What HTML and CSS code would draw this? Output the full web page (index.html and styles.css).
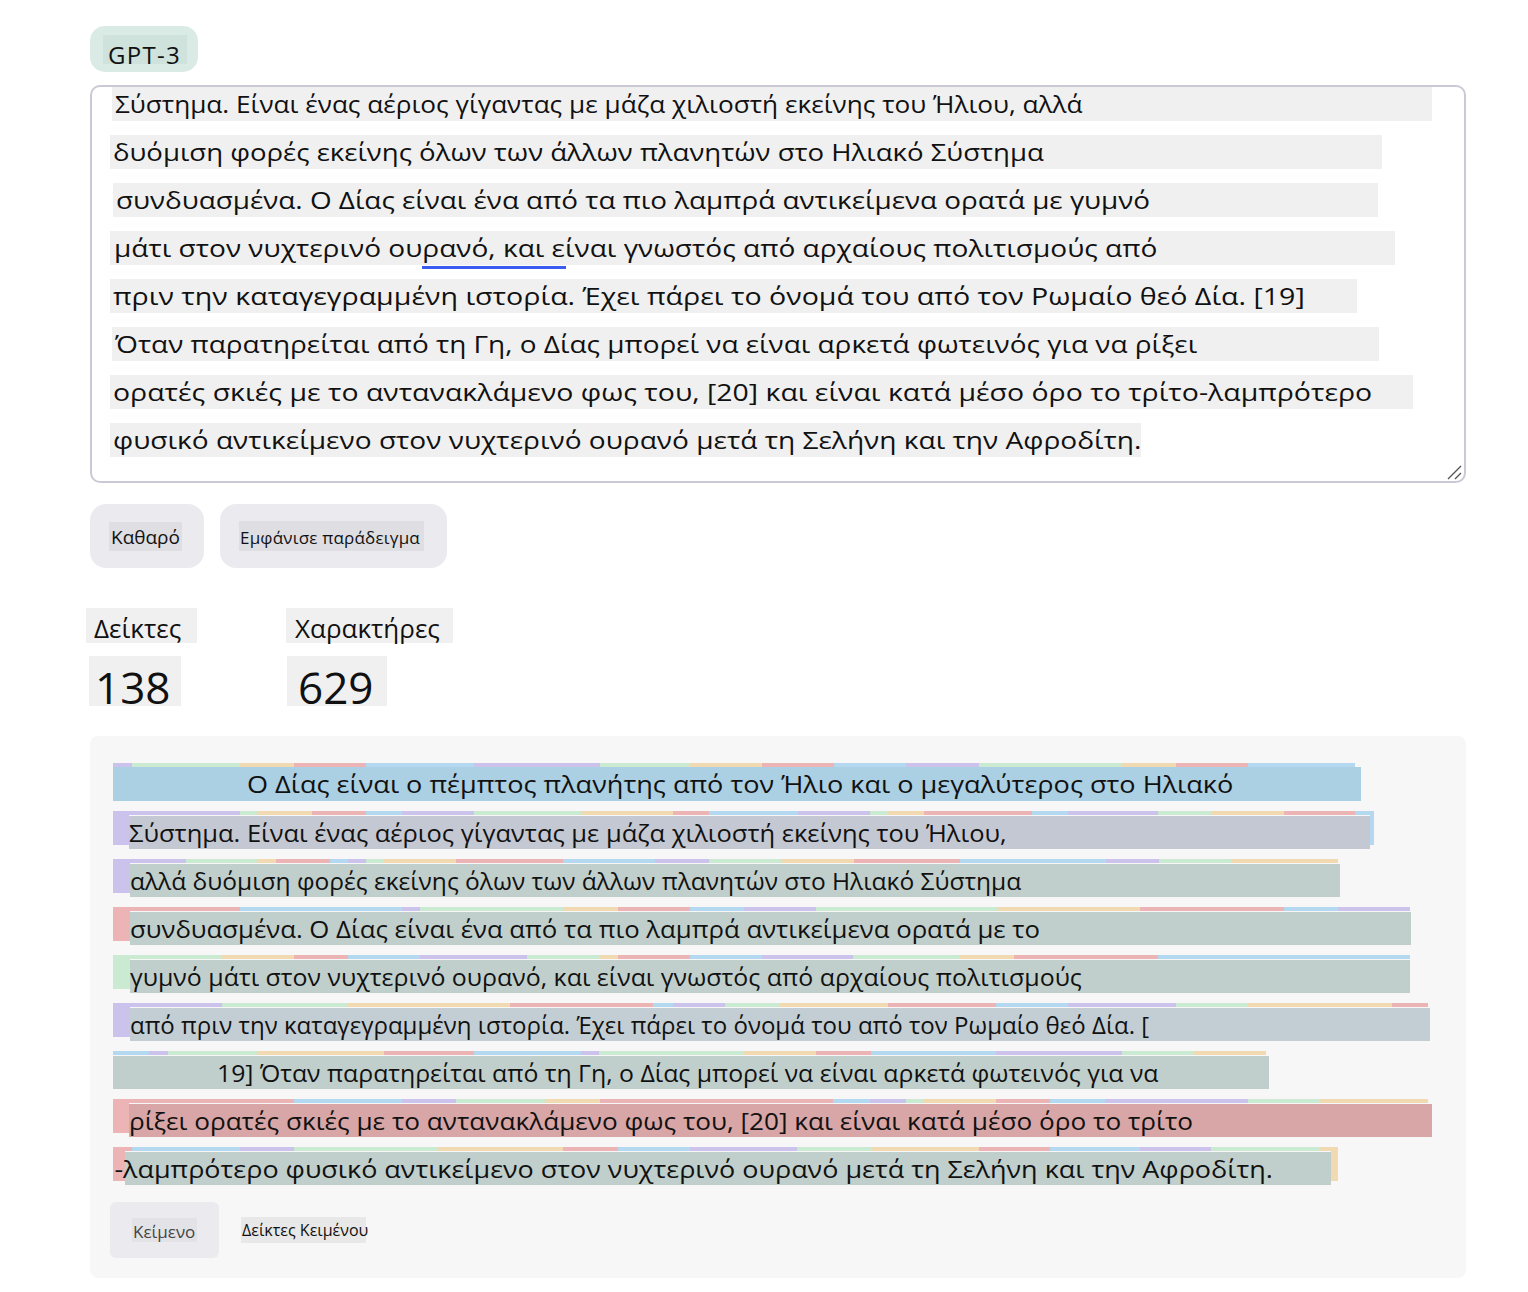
FILE: index.html
```html
<!DOCTYPE html>
<html lang="el">
<head>
<meta charset="utf-8">
<title>Tokenizer</title>
<link rel="stylesheet" href="styles.css">
</head>
<body>
<main class="page">
  <div class="model-pill"><span class="model-label">GPT-3</span></div>

  <div class="editor">
    <div class="ta-line l1"><span class="tx">Σύστημα. Είναι ένας αέριος γίγαντας με μάζα χιλιοστή εκείνης του Ήλιου, αλλά</span></div>
    <div class="ta-line l2"><span class="tx">δυόμιση φορές εκείνης όλων των άλλων πλανητών στο Ηλιακό Σύστημα</span></div>
    <div class="ta-line l3"><span class="tx">συνδυασμένα. Ο Δίας είναι ένα από τα πιο λαμπρά αντικείμενα ορατά με γυμνό</span></div>
    <div class="ta-line l4"><span class="tx">μάτι στον νυχτερινό ουρανό, και είναι γνωστός από αρχαίους πολιτισμούς από</span></div>
    <div class="ta-line l5"><span class="tx">πριν την καταγεγραμμένη ιστορία. Έχει πάρει το όνομά του από τον Ρωμαίο θεό Δία. [19]</span></div>
    <div class="ta-line l6"><span class="tx">Όταν παρατηρείται από τη Γη, ο Δίας μπορεί να είναι αρκετά φωτεινός για να ρίξει</span></div>
    <div class="ta-line l7"><span class="tx">ορατές σκιές με το αντανακλάμενο φως του, [20] και είναι κατά μέσο όρο το τρίτο-λαμπρότερο</span></div>
    <div class="ta-line l8"><span class="tx">φυσικό αντικείμενο στον νυχτερινό ουρανό μετά τη Σελήνη και την Αφροδίτη.</span></div>
    <span class="spell-mark"></span>
    <svg class="grip" width="16" height="16" viewBox="0 0 16 16"><path d="M15 2 L2 15 M15 9 L9 15" stroke="#555" stroke-width="1.4" fill="none"/></svg>
  </div>

  <div class="actions">
    <button class="btn"><span class="btn-label">Καθαρό</span></button>
    <button class="btn btn-wide"><span class="btn-label small">Εμφάνισε παράδειγμα</span></button>
  </div>

  <div class="stats">
    <div class="stat">
      <div class="stat-label">Δείκτες</div>
      <div class="stat-value">138</div>
    </div>
    <div class="stat stat-2">
      <div class="stat-label">Χαρακτήρες</div>
      <div class="stat-value">629</div>
    </div>
  </div>

  <section class="tokens">
    <div class="row r1">
      <div class="strip">
        <i class="p" style="width:19px"></i><i class="g" style="width:108px"></i><i class="o" style="width:54px"></i><i class="r" style="width:72px"></i><i class="b" style="width:108px"></i><i class="p" style="width:126px"></i><i class="g" style="width:90px"></i><i class="o" style="width:72px"></i><i class="r" style="width:72px"></i><i class="b" style="width:72px"></i><i class="p" style="width:73px"></i><i class="g" style="width:143px"></i><i class="o" style="width:54px"></i><i class="r" style="width:72px"></i><i class="b" style="width:107px"></i>
      </div>
      <div class="body"><span class="txt"><span class="sx">Ο Δίας είναι ο πέμπτος πλανήτης από τον Ήλιο και ο μεγαλύτερος στο Ηλιακό</span></span></div>
    </div>

    <div class="row r2">
      <div class="strip">
        <i class="p" style="width:127px"></i><i class="g" style="width:17px"></i><i class="o" style="width:55px"></i><i class="r" style="width:54px"></i><i class="b" style="width:36px"></i><i class="p" style="width:72px"></i><i class="g" style="width:107px"></i><i class="o" style="width:92px"></i><i class="r" style="width:36px"></i><i class="b" style="width:89px"></i><i class="p" style="width:72px"></i><i class="g" style="width:18px"></i><i class="o" style="width:36px"></i><i class="r" style="width:108px"></i><i class="b" style="width:36px"></i><i class="p" style="width:90px"></i><i class="g" style="width:53px"></i><i class="o" style="width:73px"></i><i class="r" style="width:71px"></i><i class="b" style="width:19px"></i>
      </div>
      <div class="body"><span class="edge p"></span><span class="txt"><span class="sx">Σύστημα. Είναι ένας αέριος γίγαντας με μάζα χιλιοστή εκείνης του Ήλιου,</span></span><span class="edge-r b"></span></div>
    </div>

    <div class="row r3">
      <div class="strip">
        <i class="p" style="width:73px"></i><i class="g" style="width:71px"></i><i class="o" style="width:19px"></i><i class="r" style="width:54px"></i><i class="b" style="width:18px"></i><i class="p" style="width:18px"></i><i class="g" style="width:18px"></i><i class="o" style="width:72px"></i><i class="r" style="width:107px"></i><i class="b" style="width:92px"></i><i class="p" style="width:54px"></i><i class="g" style="width:72px"></i><i class="o" style="width:73px"></i><i class="r" style="width:106px"></i><i class="b" style="width:146px"></i><i class="p" style="width:53px"></i><i class="g" style="width:72px"></i><i class="o" style="width:107px"></i>
      </div>
      <div class="body"><span class="edge p"></span><span class="txt"><span class="sx">αλλά δυόμιση φορές εκείνης όλων των άλλων πλανητών στο Ηλιακό Σύστημα</span></span></div>
    </div>

    <div class="row r4">
      <div class="strip">
        <i class="r" style="width:127px"></i><i class="b" style="width:162px"></i><i class="p" style="width:18px"></i><i class="g" style="width:143px"></i><i class="o" style="width:55px"></i><i class="r" style="width:72px"></i><i class="b" style="width:54px"></i><i class="p" style="width:72px"></i><i class="g" style="width:181px"></i><i class="o" style="width:143px"></i><i class="r" style="width:144px"></i><i class="b" style="width:54px"></i><i class="p" style="width:72px"></i>
      </div>
      <div class="body"><span class="edge r"></span><span class="txt"><span class="sx">συνδυασμένα. Ο Δίας είναι ένα από τα πιο λαμπρά αντικείμενα ορατά με το</span></span></div>
    </div>

    <div class="row r5">
      <div class="strip">
        <i class="g" style="width:109px"></i><i class="o" style="width:72px"></i><i class="r" style="width:54px"></i><i class="b" style="width:72px"></i><i class="p" style="width:107px"></i><i class="g" style="width:72px"></i><i class="o" style="width:19px"></i><i class="r" style="width:72px"></i><i class="b" style="width:72px"></i><i class="p" style="width:91px"></i><i class="g" style="width:106px"></i><i class="o" style="width:55px"></i><i class="r" style="width:144px"></i><i class="b" style="width:252px"></i>
      </div>
      <div class="body"><span class="edge g"></span><span class="txt"><span class="sx">γυμνό μάτι στον νυχτερινό ουρανό, και είναι γνωστός από αρχαίους πολιτισμούς</span></span></div>
    </div>

    <div class="row r6">
      <div class="strip">
        <i class="p" style="width:109px"></i><i class="g" style="width:126px"></i><i class="o" style="width:162px"></i><i class="r" style="width:143px"></i><i class="b" style="width:20px"></i><i class="p" style="width:52px"></i><i class="g" style="width:55px"></i><i class="o" style="width:108px"></i><i class="r" style="width:108px"></i><i class="b" style="width:72px"></i><i class="p" style="width:108px"></i><i class="g" style="width:72px"></i><i class="o" style="width:144px"></i><i class="r" style="width:36px"></i>
      </div>
      <div class="body"><span class="edge p"></span><span class="txt"><span class="sx">από πριν την καταγεγραμμένη ιστορία. Έχει πάρει το όνομά του από τον Ρωμαίο θεό Δία. [</span></span></div>
    </div>

    <div class="row r7">
      <div class="strip">
        <i class="b" style="width:36px"></i><i class="p" style="width:19px"></i><i class="g" style="width:89px"></i><i class="o" style="width:127px"></i><i class="r" style="width:90px"></i><i class="b" style="width:107px"></i><i class="p" style="width:18px"></i><i class="g" style="width:145px"></i><i class="o" style="width:72px"></i><i class="r" style="width:55px"></i><i class="b" style="width:125px"></i><i class="p" style="width:126px"></i><i class="g" style="width:72px"></i><i class="o" style="width:72px"></i>
      </div>
      <div class="body"><span class="txt"><span class="sx">19] Όταν παρατηρείται από τη Γη, ο Δίας μπορεί να είναι αρκετά φωτεινός για να</span></span></div>
    </div>

    <div class="row r8">
      <div class="strip">
        <i class="r" style="width:181px"></i><i class="b" style="width:108px"></i><i class="p" style="width:54px"></i><i class="g" style="width:89px"></i><i class="o" style="width:55px"></i><i class="r" style="width:233px"></i><i class="b" style="width:37px"></i><i class="p" style="width:36px"></i><i class="g" style="width:17px"></i><i class="o" style="width:73px"></i><i class="r" style="width:54px"></i><i class="b" style="width:55px"></i><i class="p" style="width:143px"></i><i class="g" style="width:72px"></i><i class="o" style="width:108px"></i>
      </div>
      <div class="body"><span class="edge r"></span><span class="txt"><span class="sx">ρίξει ορατές σκιές με το αντανακλάμενο φως του, [20] και είναι κατά μέσο όρο το τρίτο</span></span></div>
    </div>

    <div class="row r9">
      <div class="strip">
        <i class="r" style="width:19px"></i><i class="b" style="width:108px"></i><i class="p" style="width:54px"></i><i class="g" style="width:144px"></i><i class="o" style="width:125px"></i><i class="r" style="width:55px"></i><i class="b" style="width:72px"></i><i class="p" style="width:107px"></i><i class="g" style="width:74px"></i><i class="o" style="width:108px"></i><i class="r" style="width:71px"></i><i class="b" style="width:90px"></i><i class="p" style="width:71px"></i><i class="g" style="width:109px"></i><i class="o" style="width:18px"></i>
      </div>
      <div class="body"><span class="edge r"></span><span class="txt"><span class="sx">-λαμπρότερο φυσικό αντικείμενο στον νυχτερινό ουρανό μετά τη Σελήνη και την Αφροδίτη.</span></span><span class="edge-r o"></span></div>
    </div>

    <div class="view-tabs">
      <button class="tab active"><span class="tab-label">Κείμενο</span></button>
      <button class="tab"><span class="tab-label plain">Δείκτες Κειμένου</span></button>
    </div>
  </section>
</main>
</body>
</html>
```

FILE: styles.css
```css
* { box-sizing: border-box; }

html, body {
  margin: 0;
  padding: 0;
  background: #ffffff;
  color: #111111;
  font-family: "Open Sans", "Noto Sans", "DejaVu Sans", sans-serif;
}

.page {
  width: 1466px;
  padding: 26px 0 0 90px;
}

/* model pill */
.model-pill {
  display: inline-flex;
  height: 46px;
  padding: 9px 11px 0 13px;
  background: #daebe5;
  border-radius: 15px;
}
.model-label {
  display: inline-block;
  width: 84px;
  height: 29px;
  padding-left: 5px;
  background: #cfe2dc;
  font-size: 24px;
  line-height: 40px;
  letter-spacing: 1.3px;
  color: #111;
  overflow: visible;
}

/* editor */
.editor {
  position: relative;
  margin-top: 13px;
  width: 1376px;
  height: 398px;
  border: 2px solid #cacad6;
  border-radius: 10px;
  padding: 0 0 0 18px;
}
.ta-line {
  height: 34px;
  margin-bottom: 14px;
  background: #f0f0f0;
  font-size: 24px;
  line-height: 34px;
  padding-left: 3px;
  white-space: nowrap;
  color: #111;
}
.tx {
  display: inline-block;
  transform-origin: 0 50%;
}
.ta-line.l1 { width: 1320px; margin-left: 2px; }
.ta-line.l2 { width: 1272px; }
.ta-line.l3 { width: 1265px; margin-left: 3px; }
.ta-line.l4 { width: 1285px; padding-left: 4px; }
.ta-line.l5 { width: 1247px; }
.ta-line.l6 { width: 1267px; margin-left: 2px; }
.ta-line.l7 { width: 1303px; }
.ta-line.l8 { width: 1031px; }
.l1 .tx { transform: scaleX(1.09); }
.l2 .tx { transform: scaleX(1.148); }
.l3 .tx { transform: scaleX(1.16); }
.l4 .tx { transform: scaleX(1.169); }
.l5 .tx { transform: scaleX(1.19); }
.l6 .tx { transform: scaleX(1.164); }
.l7 .tx { transform: scaleX(1.185); }
.l8 .tx { transform: scaleX(1.17); }

.spell-mark {
  position: absolute;
  left: 330px;
  top: 179px;
  width: 144px;
  height: 3px;
  background: #3a5cf0;
}
.grip {
  position: absolute;
  right: 2px;
  bottom: 1px;
}

/* actions */
.actions {
  display: flex;
  gap: 16px;
  margin-top: 21px;
}
.btn {
  display: flex;
  align-items: center;
  height: 64px;
  padding: 0 22px 0 19px;
  border: none;
  border-radius: 16px;
  background: #ebebef;
  font-family: inherit;
  color: #111;
  cursor: pointer;
}
.btn-wide { padding: 0 23px 0 19px; }
.btn-label {
  display: inline-block;
  width: 73px;
  height: 29px;
  background: #dedee3;
  font-size: 19px;
  line-height: 31px;
  padding-left: 2px;
  white-space: nowrap;
  text-align: left;
}
.btn-label.small {
  width: 185px;
  height: 30px;
  font-size: 17px;
  line-height: 33px;
  padding-left: 1px;
  letter-spacing: 0.2px;
}

/* stats */
.stats {
  display: flex;
  margin-top: 40px;
  margin-left: -4px;
}
.stat { width: 200px; }
.stat-label {
  display: inline-block;
  width: 111px;
  height: 35px;
  background: #f0f0f0;
  font-size: 26px;
  line-height: 40px;
  padding-left: 8px;
  white-space: nowrap;
}
.stat-2 .stat-label { width: 167px; padding-left: 9px; }
.stat-value {
  width: 92px;
  height: 50px;
  margin: 13px 0 0 3px;
  background: #f0f0f0;
  font-size: 44px;
  line-height: 62px;
  padding-left: 6px;
}
.stat-2 .stat-value { width: 100px; margin-left: 1px; padding-left: 11px; }

/* tokens panel */
.tokens {
  margin-top: 30px;
  width: 1376px;
  height: 542px;
  background: #f7f7f7;
  border-radius: 8px;
  padding: 27px 0 0 23px;
}
.row {
  height: 38px;
  margin-bottom: 10px;
}
.strip {
  display: flex;
  height: 4px;
}
.strip i { display: block; height: 4px; flex: none; }
.p { background: #cbc3ec; }
.g { background: #cbead2; }
.o { background: #f1d9b2; }
.r { background: #ecb4b5; }
.b { background: #b3d8ef; }

.body {
  display: flex;
  height: 34px;
}
.edge { flex: none; width: 16px; height: 34px; margin-top: -4px; }
.edge-r { flex: none; height: 34px; margin-top: -4px; }
.txt {
  flex: 1;
  display: block;
  height: 33px;
  margin-top: 1px;
  background: #c0cfcc;
  font-size: 24px;
  line-height: 33px;
  white-space: nowrap;
  color: #111;
}
.sx {
  display: inline-block;
  transform-origin: 0 50%;
}

.r1 { width: 1248px; }
.r1 .txt { background: #abcfe3; margin-top: 0; height: 34px; line-height: 34px; padding-left: 134px; }
.r1 .sx { transform: scaleX(1.128); }
.r2 { width: 1261px; }
.r2 .txt { background: #c4c8d2; }
.r2 .edge-r { width: 4px; }
.r2 .sx { transform: scaleX(1.062); }
.r3 { width: 1227px; }
.r3 .edge { width: 17px; }
.r3 .sx { transform: scaleX(1.022); }
.r4 { width: 1298px; }
.r4 .edge { width: 17px; }
.r4 .sx { transform: scaleX(1.073); }
.r5 { width: 1297px; }
.r5 .edge { width: 17px; }
.r5 .sx { transform: scaleX(1.038); }
.r6 { width: 1317px; }
.r6 .edge { width: 17px; }
.r6 .txt { background: #c3ced4; }
.r6 .sx { transform: scaleX(1.002); }
.r7 { width: 1156px; }
.r7 .txt { padding-left: 104px; }
.r7 .sx { transform: scaleX(1.033); }
.r8 { width: 1319px; }
.r8 .txt { background: #d8a6a6; }
.r8 .sx { transform: scaleX(1.09); }
.r9 { width: 1225px; }
.r9 .edge { width: 12px; }
.r9 .txt { text-indent: -5px; }
.r9 .sx { transform: scaleX(1.123); }
.r9 .edge-r { width: 7px; }

/* bottom tabs */
.view-tabs {
  display: flex;
  align-items: center;
  gap: 22px;
  margin: 17px 0 0 -3px;
}
.tab {
  display: flex;
  align-items: center;
  height: 56px;
  padding: 0 22px 0 22px;
  border: none;
  border-radius: 6px;
  background: transparent;
  font-family: inherit;
  cursor: pointer;
}
.tab.active { background: #ebebef; }
.tab-label {
  display: inline-block;
  width: 65px;
  height: 24px;
  background: #e3e3e7;
  font-size: 17px;
  line-height: 28px;
  color: #444;
  padding-left: 1px;
  white-space: nowrap;
  text-align: left;
}
.tab-label.plain {
  width: 125px;
  height: 26px;
  background: #e8e8e8;
  color: #111;
  font-size: 16px;
  line-height: 26px;
  letter-spacing: 0;
}
.tab:not(.active) { padding: 0; }
```
